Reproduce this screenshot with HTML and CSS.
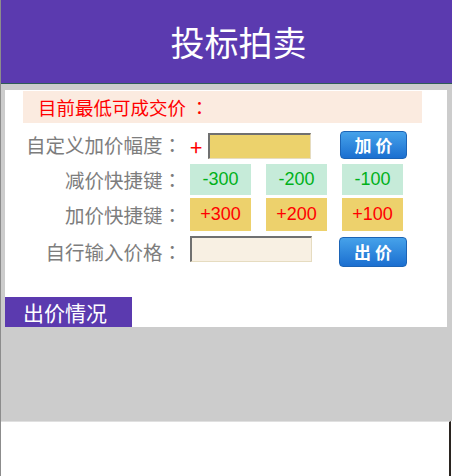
FILE: index.html
```html
<!doctype html>
<html>
<head>
    <meta charset="utf-8">
    <title>投标拍卖</title>
    <link rel="stylesheet" href="styles.css">
</head>

<body>
<div class="page">
    <div class="header">投标拍卖</div>
    <div class="main">
        <div class="panel">
            <div class="price_now">目前最低可成交价 <span class="colon">：</span></div>
            <div class="row row1">
                <span class="label">自定义加价幅度<span class="colon">：</span></span>
                <span class="plus">+</span>
                <input type="text" class="ipt ipt_add">
                <a href="javascript:;" class="btn btn_add">加 价</a>
            </div>
            <div class="row row2">
                <span class="label">减价快捷键<span class="colon">：</span></span>
                <a href="javascript:;" class="key key_sub">-300</a>
                <a href="javascript:;" class="key key_sub">-200</a>
                <a href="javascript:;" class="key key_sub">-100</a>
            </div>
            <div class="row row3">
                <span class="label">加价快捷键<span class="colon">：</span></span>
                <a href="javascript:;" class="key key_add">+300</a>
                <a href="javascript:;" class="key key_add">+200</a>
                <a href="javascript:;" class="key key_add">+100</a>
            </div>
            <div class="row row4">
                <span class="label">自行输入价格<span class="colon">：</span></span>
                <input type="text" class="ipt ipt_price">
                <a href="javascript:;" class="btn btn_bid">出 价</a>
            </div>
            <div class="tab">出价情况</div>
        </div>
        <div class="record"></div>
    </div>
    <div class="footer"></div>
</div>
</body>

</html>
```

FILE: styles.css
```css
body {
    margin: 0;
    padding: 0;
    font-family: "Noto Sans CJK SC", "Liberation Sans", sans-serif;
}

a {
    text-decoration: none;
}

.page {
    width: 452px;
    height: 476px;
    box-sizing: border-box;
    border-left: 1px solid #8c8c8c;
}

.header {
    height: 83px;
    line-height: 83px;
    background-color: #5b3aaf;
    border-bottom: 1px solid #2f5c57;
    color: #fff;
    font-size: 34px;
    text-align: center;
    padding-left: 24px;
}

.main {
    background-color: #ccc;
    padding: 6px 5px 0 4px;
}

.panel {
    background-color: #fff;
    padding-top: 1px;
}

/* 冒号居中 */
.colon {
    font-family: "Noto Sans CJK TC", sans-serif;
}

.price_now {
    margin: 0 25px 0 18px;
    height: 32px;
    line-height: 32px;
    padding-left: 15px;
    background-color: #fbebe0;
    color: #f00;
    font-size: 18.5px;
}

/* 表单行 */
.row {
    display: flex;
    align-items: center;
}

.label {
    width: 177px;
    margin-right: 8px;
    text-align: right;
    color: #7d7d7d;
    font-size: 19.5px;
    line-height: 24px;
    white-space: nowrap;
}

.row1 {
    margin-top: 8px;
    height: 28px;
}

.row2 {
    margin-top: 5px;
    height: 31px;
}

.row3 {
    margin-top: 3px;
    height: 33px;
}

.row4 {
    margin-top: 5px;
    height: 31px;
}

.plus {
    width: 18px;
    color: #f00;
    font-size: 22px;
    line-height: 24px;
    margin-top: 2px;
}

.ipt {
    box-sizing: border-box;
    margin: 0;
    padding: 0 4px;
    border-style: solid;
    border-width: 2px 1px 1px 2px;
    border-color: #707070 #e6dcc0 #e6dcc0 #707070;
    outline: none;
}

.ipt_add {
    width: 103px;
    height: 26px;
    margin-top: 2px;
    background-color: #ecd26c;
}

.ipt_price {
    width: 122px;
    height: 26px;
    margin-top: -5px;
    background-color: #f8f0e3;
}

.btn {
    display: block;
    box-sizing: border-box;
    height: 28px;
    line-height: 26px;
    text-align: center;
    color: #fff;
    font-size: 17px;
    font-weight: bold;
    border: 1px solid #1c64b6;
    border-radius: 4px;
    background: linear-gradient(#46a2ea, #1b6fd0);
}

.btn_add {
    width: 67px;
    margin-left: 29px;
}

.btn_bid {
    width: 68px;
    height: 30px;
    line-height: 28px;
    margin-left: 27px;
}

/* 快捷键 */
.key {
    display: block;
    box-sizing: border-box;
    width: 61px;
    height: 100%;
    margin-right: 15px;
    text-align: center;
    font-family: "Liberation Sans", sans-serif;
    font-size: 18px;
}

.key_sub {
    line-height: 31px;
    background-color: #c6ebd9;
    color: #00b11a;
}

.key_add {
    line-height: 33px;
    background-color: #edd16c;
    color: #f00;
}

.tab {
    margin-top: 30px;
    width: 127px;
    height: 30px;
    line-height: 30px;
    box-sizing: border-box;
    padding-left: 18px;
    background-color: #5b3aaf;
    color: #fff;
    font-size: 21px;
}

.record {
    height: 94px;
    margin-right: -5px;
}

.footer {
    height: 54px;
    border-top: 1px solid #e0e0e0;
    border-right: 2px solid #2a2420;
    margin-right: 1px;
}
```
